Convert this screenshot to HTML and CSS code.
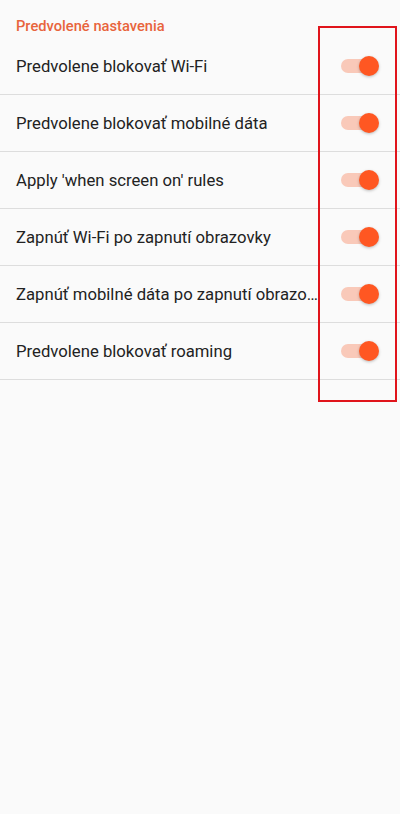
FILE: index.html
```
<!DOCTYPE html>
<html lang="sk">
<head>
<meta charset="utf-8">
<link rel="stylesheet" href="styles.css">
</head>
<body>
<div class="screen">
  <div class="section-title">Predvolené nastavenia</div>
  <div class="row"><span class="label">Predvolene blokovať Wi-Fi</span><span class="switch"><span class="track"></span><span class="thumb"></span></span></div>
  <div class="row"><span class="label">Predvolene blokovať mobilné dáta</span><span class="switch"><span class="track"></span><span class="thumb"></span></span></div>
  <div class="row"><span class="label">Apply 'when screen on' rules</span><span class="switch"><span class="track"></span><span class="thumb"></span></span></div>
  <div class="row"><span class="label">Zapnúť Wi-Fi po zapnutí obrazovky</span><span class="switch"><span class="track"></span><span class="thumb"></span></span></div>
  <div class="row"><span class="label">Zapnúť mobilné dáta po zapnutí obrazo…</span><span class="switch"><span class="track"></span><span class="thumb"></span></span></div>
  <div class="row"><span class="label">Predvolene blokovať roaming</span><span class="switch"><span class="track"></span><span class="thumb"></span></span></div>
  <div class="highlight"></div>
</div>
</body>
</html>
```
FILE: styles.css
```
html, body {
  margin: 0;
  padding: 0;
  background: #fafafa;
}
.screen {
  position: relative;
  width: 400px;
  height: 814px;
  background: #fafafa;
  font-family: Roboto, "Noto Sans", sans-serif;
  overflow: hidden;
}
.section-title {
  box-sizing: border-box;
  height: 38px;
  padding: 16px 16px 0;
  font-size: 14.7px;
  line-height: 20px;
  font-weight: 500;
  color: #e8643c;
}
.row {
  box-sizing: border-box;
  height: 57px;
  display: flex;
  align-items: center;
  padding: 0 21px 0 16px;
  border-bottom: 1px solid #dddddd;
}
.label {
  flex: 1;
  min-width: 0;
  white-space: nowrap;
  font-size: 16.7px;
  color: #222222;
  margin-right: 18px;
}
.switch {
  position: relative;
  width: 38px;
  height: 20px;
  flex: none;
}
.track {
  position: absolute;
  left: 0;
  top: 3px;
  width: 34px;
  height: 14px;
  border-radius: 7px;
  background: #f9c9b9;
}
.thumb {
  position: absolute;
  right: 0;
  top: 0;
  width: 20px;
  height: 20px;
  border-radius: 50%;
  background: #ff5722;
  box-shadow: 0 1px 3px rgba(0,0,0,0.25);
}
.highlight {
  position: absolute;
  left: 318px;
  top: 26px;
  width: 79px;
  height: 376px;
  box-sizing: border-box;
  border: 2px solid #e0141b;
}
```
